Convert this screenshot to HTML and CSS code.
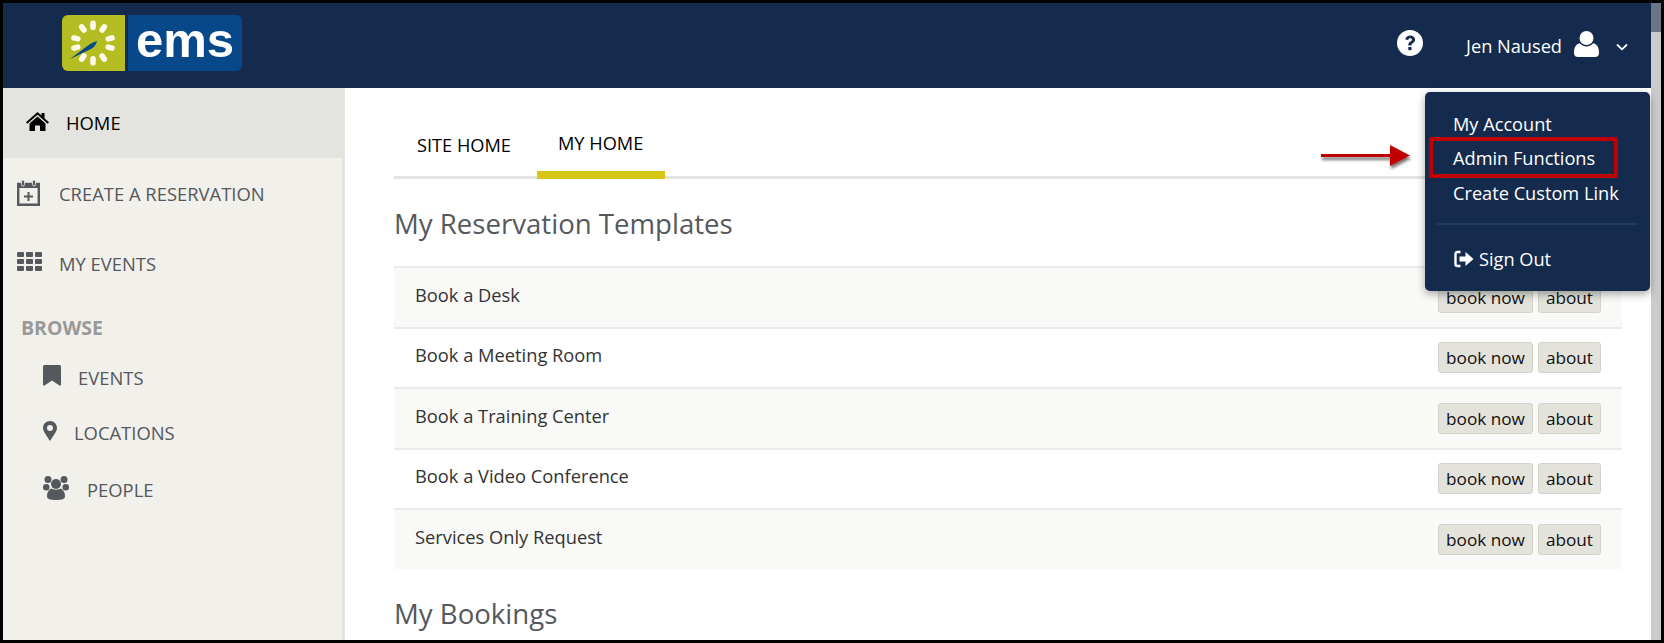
FILE: index.html
```html
<!DOCTYPE html>
<html lang="en">

<head>
    <meta charset="UTF-8">
    <meta name="viewport" content="width=device-width, initial-scale=1.0">
    <title>EMS - My Home</title>
    <link rel="stylesheet" href="styles.css">
</head>

<body>
    <div class="frame">
        <div class="page">
            <header class="topbar">
                <div class="logo">
                    <div class="logo-sun">
                        <svg width="63" height="56" viewBox="0 0 63 56">
                            <g fill="#fdfbe8">
                                <rect x="28.2" y="5.500" width="5.600" height="9.500" rx="2.800"/>
                                <rect x="28.2" y="5.500" width="5.600" height="9.500" rx="2.800" transform="rotate(35 31 28)"/>
                                <rect x="28.2" y="5.500" width="5.600" height="9.500" rx="2.800" transform="rotate(75 31 28)"/>
                                <rect x="28.2" y="5.500" width="5.600" height="9.500" rx="2.800" transform="rotate(105 31 28)"/>
                                <rect x="28.2" y="5.500" width="5.600" height="9.500" rx="2.800" transform="rotate(145 31 28)"/>
                                <rect x="28.2" y="5.500" width="5.600" height="9.500" rx="2.800" transform="rotate(180 31 28)"/>
                                <rect x="28.2" y="5.500" width="5.600" height="9.500" rx="2.800" transform="rotate(215 31 28)"/>
                                <rect x="28.2" y="5.500" width="5.600" height="9.500" rx="2.800" transform="rotate(255 31 28)"/>
                                <rect x="28.2" y="5.500" width="5.600" height="9.500" rx="2.800" transform="rotate(285 31 28)"/>
                                <rect x="28.2" y="5.500" width="5.600" height="9.500" rx="2.800" transform="rotate(325 31 28)"/>
                            </g>
                            <path d="M8 44L26 30.500Q30 27 35 26Q34 31 29 34Z" fill="#07488a"/>
                        </svg>
                    </div>
                    <div class="logo-word">ems</div>
                </div>
                <div class="topbar-right">
                    <svg class="help-icon" width="26" height="26" viewBox="0 0 26 26">
                        <circle cx="13" cy="13" r="13" fill="#fff"/>
                        <path d="M8.3 9.6C8.8 6.9 10.7 5.5 13.3 5.5c2.7 0 4.8 1.7 4.8 4.1 0 1.8-1 2.8-2.3 3.700-1 .7-1.3 1.1-1.3 2.200h-3.2c0-2 .6-3 2-3.900 1-.7 1.600-1.100 1.600-1.900 0-.8-.7-1.400-1.700-1.400-1.100 0-1.800.6-2.100 1.800z" fill="#152b4d"/>
                        <rect x="11.3" y="17" width="3.2" height="3.2" fill="#152b4d"/>
                    </svg>
                    <span class="user-name">Jen Naused</span>
                    <svg class="user-icon" width="25" height="26" viewBox="0 0 25 26">
                        <circle cx="12.5" cy="7" r="7" fill="#fff"/>
                        <path d="M0 22C0 15 3 12.500 6 12.500C8 14.500 10 15.500 12.500 15.500S17 14.500 19 12.500C22 12.500 25 15 25 22C25 25 23 26 21 26H4C2 26 0 25 0 22Z" fill="#fff"/>
                    </svg>
                    <svg class="chevron" width="12" height="8" viewBox="0 0 12 8">
                        <path d="M1 1.500L6 6.300L11 1.500" fill="none" stroke="#fff" stroke-width="1.800"/>
                    </svg>
                </div>
            </header>

            <div class="body-row">
                <nav class="sidebar">
                    <a class="nav-item nav-home">
                        <svg width="23" height="19" viewBox="0 0 23 19">
                            <path d="M11.500 0L15.500 3.500V1H18.500V6.200L23 10.200L21.700 11.700L11.500 2.800L1.300 11.700L0 10.200Z" fill="#000"/>
                            <path d="M3.500 11.500L11.500 4.500L19.500 11.500V19H14V13.500H9V19H3.500Z" fill="#000"/>
                        </svg>
                        <span class="home-label">HOME</span>
                    </a>
                    <a class="nav-item nav-create">
                        <svg width="23" height="27" viewBox="0 0 23 27">
                            <path d="M1.200 5H21.800V25.800H1.200Z" fill="none" stroke="#55585d" stroke-width="2.400"/>
                            <rect x="1" y="4" width="21" height="5" fill="#55585d"/>
                            <rect x="4.500" y="1" width="3" height="6" rx="1.500" fill="#55585d" stroke="#f1f0ea" stroke-width=".8"/>
                            <rect x="15.500" y="1" width="3" height="6" rx="1.500" fill="#55585d" stroke="#f1f0ea" stroke-width=".8"/>
                            <path d="M7 17.500H16M11.500 13V22" stroke="#55585d" stroke-width="2"/>
                        </svg>
                        <span>CREATE A RESERVATION</span>
                    </a>
                    <a class="nav-item nav-events">
                        <svg width="25" height="19" viewBox="0 0 25 19">
                            <g fill="#55585d">
                                <rect width="7" height="5" rx="1"/><rect x="9" width="7" height="5" rx="1"/><rect x="18" width="7" height="5" rx="1"/>
                                <rect y="7" width="7" height="5" rx="1"/><rect x="9" y="7" width="7" height="5" rx="1"/><rect x="18" y="7" width="7" height="5" rx="1"/>
                                <rect y="14" width="7" height="5" rx="1"/><rect x="9" y="14" width="7" height="5" rx="1"/><rect x="18" y="14" width="7" height="5" rx="1"/>
                            </g>
                        </svg>
                        <span>MY EVENTS</span>
                    </a>
                    <div class="nav-title">BROWSE</div>
                    <a class="nav-sub nav-sub-events">
                        <svg width="18" height="21" viewBox="0 0 18 21">
                            <path d="M1.500 0H16.500Q18 0 18 1.500V19.500Q18 21 16.500 20.500L9 15.500L1.500 20.500Q0 21 0 19.500V1.500Q0 0 1.500 0Z" fill="#55585d"/>
                        </svg>
                        <span>EVENTS</span>
                    </a>
                    <a class="nav-sub nav-sub-locations">
                        <svg width="14" height="20" viewBox="0 0 14 20">
                            <path fill-rule="evenodd" d="M7 0C3 0 0 3 0 7C0 10.500 4.500 16 7 20C9.500 16 14 10.500 14 7C14 3 11 0 7 0ZM7 4A3 3 0 1 1 7 10A3 3 0 1 1 7 4Z" fill="#55585d"/>
                        </svg>
                        <span>LOCATIONS</span>
                    </a>
                    <a class="nav-sub nav-sub-people">
                        <svg width="26" height="24" viewBox="0 0 26 24">
                            <g fill="#55585d">
                                <circle cx="5" cy="3.500" r="3.500"/><circle cx="21" cy="3.500" r="3.500"/>
                                <circle cx="13" cy="8" r="5"/>
                                <rect x="0" y="8" width="6.500" height="6.500" rx="3"/><rect x="19.500" y="8" width="6.500" height="6.500" rx="3"/>
                                <path d="M4 20C4 16 6 13.500 8.500 12.500C10 14 16 14 17.500 12.500C20 13.500 22 16 22 20C22 23 19 24 13 24S4 23 4 20Z"/>
                            </g>
                        </svg>
                        <span>PEOPLE</span>
                    </a>
                </nav>

                <main class="content">
                    <div class="tabs">
                        <a class="tab">SITE HOME</a>
                        <a class="tab tab-active">MY HOME</a>
                    </div>
                    <h2 class="section-title">My Reservation Templates</h2>
                    <div class="template-list">
                        <div class="template-row row-odd">
                            <span class="row-label">Book a Desk</span>
                            <div class="row-buttons"><button class="btn btn-book">book now</button><button class="btn">about</button></div>
                        </div>
                        <div class="template-row">
                            <span class="row-label">Book a Meeting Room</span>
                            <div class="row-buttons"><button class="btn btn-book">book now</button><button class="btn">about</button></div>
                        </div>
                        <div class="template-row row-odd">
                            <span class="row-label">Book a Training Center</span>
                            <div class="row-buttons"><button class="btn btn-book">book now</button><button class="btn">about</button></div>
                        </div>
                        <div class="template-row">
                            <span class="row-label">Book a Video Conference</span>
                            <div class="row-buttons"><button class="btn btn-book">book now</button><button class="btn">about</button></div>
                        </div>
                        <div class="template-row row-odd">
                            <span class="row-label">Services Only Request</span>
                            <div class="row-buttons"><button class="btn btn-book">book now</button><button class="btn">about</button></div>
                        </div>
                    </div>
                    <h2 class="section-title">My Bookings</h2>
                </main>
            </div>

            <div class="user-menu">
                <a class="menu-item">My Account</a>
                <a class="menu-item menu-marked">Admin Functions</a>
                <a class="menu-item">Create Custom Link</a>
                <div class="menu-divider"></div>
                <a class="menu-item menu-signout">
                    <svg width="21" height="18" viewBox="0 0 20 18">
                        <path d="M7 2H4Q2 2 2 4V14Q2 16 4 16H7" fill="none" stroke="#fff" stroke-width="2.400"/>
                        <path d="M6 6.500H12V2L20 9L12 16V11.500H6Z" fill="#fff"/>
                    </svg>
                    <span>Sign Out</span>
                </a>
            </div>

            <svg class="red-arrow" width="96" height="32" viewBox="0 0 96 32">
                <defs>
                    <filter id="arrow-shadow" x="-10%" y="-50%" width="120%" height="220%">
                        <feDropShadow dx="1" dy="3" stdDeviation="1.500" flood-color="#000" flood-opacity=".55"/>
                    </filter>
                </defs>
                <path d="M1 10H70V1L90 11.500L70 22V13H1Z" fill="#c00000" filter="url(#arrow-shadow)"/>
            </svg>
        </div>
        <div class="scrollbar"><div class="scroll-top"></div></div>
    </div>
</body>

</html>
```

FILE: styles.css
```css
html,
body {
    margin: 0;
    padding: 0;
    height: 100%;
    overflow: hidden;
}

body {
    font-family: "Open Sans", Arial, sans-serif;
    background-color: #000;
}

.frame {
    display: flex;
    height: 637px;
    margin: 3px;
    overflow: hidden;
}

.page {
    position: relative;
    flex: 1;
    min-width: 0;
    background-color: #fff;
}

.scrollbar {
    width: 10px;
    background-color: #cbcbcb;
}

.scroll-top {
    height: 29px;
    background-color: #6b7588;
}

/* top bar */
.topbar {
    display: flex;
    justify-content: space-between;
    align-items: center;
    height: 85px;
    padding: 0 23px 0 59px;
    box-sizing: border-box;
    background-color: #152b4d;
}

.logo {
    display: flex;
    gap: 3px;
    height: 56px;
    margin-bottom: 6px;
}

.logo-sun {
    width: 63px;
    background-color: #b4bd22;
    border-radius: 6px 0 0 6px;
}

.logo-word {
    width: 114px;
    text-align: center;
    background-color: #07488a;
    border-radius: 0 6px 6px 0;
    color: #fff;
    font-family: "Liberation Sans", Arial, sans-serif;
    font-weight: bold;
    font-size: 49px;
    line-height: 50px;
}

.topbar-right {
    display: flex;
    align-items: center;
    color: #fff;
}

.help-icon {
    margin-right: 43px;
    margin-bottom: 6px;
}

.user-name {
    font-size: 18.200px;
    margin-right: 12px;
}

.user-icon {
    margin-right: 17px;
    margin-bottom: 4px;
}

.chevron {
    margin-top: 3px;
}

/* sidebar */
.body-row {
    display: flex;
    height: 552px;
}

.sidebar {
    width: 339px;
    flex: none;
    background-color: #f1f0ea;
    border-right: 3px solid #e3e4df;
    color: #55585d;
    font-size: 18.400px;
}

.nav-item,
.nav-sub {
    display: flex;
    align-items: center;
}

.nav-home {
    height: 70px;
    padding-left: 23px;
    gap: 17px;
    background-color: #e3e4df;
    color: #000;
}

.nav-home svg {
    margin-bottom: 4px;
}

.home-label {
    margin-bottom: 2px;
}

.nav-create {
    height: 71px;
    padding-left: 14px;
    gap: 19px;
}

.nav-create svg {
    margin-bottom: 3px;
}

.nav-events {
    height: 68px;
    padding-left: 14px;
    gap: 17px;
}

.nav-events svg {
    margin-bottom: 4px;
}

.nav-title {
    margin: 19px 0 0 18px;
    height: 24px;
    line-height: 24px;
    font-weight: 700;
    font-size: 19.500px;
    color: #999;
}

.nav-sub {
    height: 56px;
    padding-left: 40px;
}

.nav-sub svg {
    margin-bottom: 4px;
}

.nav-sub-events {
    margin-top: 9px;
    gap: 17px;
}

.nav-sub-locations {
    gap: 17px;
    height: 55px;
}

.nav-sub-people {
    gap: 18px;
    height: 59px;
}

/* main content */
.content {
    flex: 1;
    min-width: 0;
    padding: 0 29px 0 49px;
}

.tabs {
    display: flex;
    height: 91px;
    box-sizing: border-box;
    border-bottom: 3px solid #e3e3e3;
    color: #000;
    font-size: 18.200px;
}

.tab {
    box-sizing: border-box;
    height: 91px;
    width: 143px;
    padding: 45px 0 0 23px;
}

.tab-active {
    width: 128px;
    padding: 43px 0 0 21px;
    border-bottom: 8px solid #d6c618;
}

.section-title {
    margin: 0;
    padding: 26px 0 25px;
    font-weight: 400;
    font-size: 27.600px;
    line-height: 36px;
    color: #55585d;
}

.template-row {
    display: flex;
    justify-content: space-between;
    align-items: center;
    height: 60.500px;
    box-sizing: border-box;
    padding: 0 21px;
    border-top: 2px solid #eaeaea;
    color: #333;
    font-size: 18.300px;
}

.row-label {
    margin-bottom: 6px;
}

.row-odd {
    background-color: #f9f9f7;
}

.row-buttons {
    display: flex;
    gap: 5px;
}

.btn {
    height: 31px;
    padding: 0 7px;
    font-family: inherit;
    font-size: 17.200px;
    color: #111;
    background-color: #e3e3dc;
    border: 1px solid #d3d3ca;
    border-radius: 3px;
}

/* user dropdown */
.user-menu {
    position: absolute;
    top: 89px;
    right: 1px;
    width: 225px;
    height: 199px;
    box-sizing: border-box;
    padding: 15px 0 0 28px;
    border-radius: 5px;
    background-color: #152b4d;
    box-shadow: 0 3px 8px rgba(0, 0, 0, 0.35);
    color: #fff;
    font-size: 18.200px;
}

.menu-item {
    display: block;
    height: 34.500px;
    line-height: 34.500px;
}

.menu-marked {
    position: relative;
    line-height: 32.500px;
}

.menu-marked::after {
    content: "";
    position: absolute;
    left: -24px;
    top: -5px;
    width: 181px;
    height: 33px;
    border: 4px solid #c00000;
}

.menu-divider {
    height: 2px;
    margin: 12px 12px 17px -16px;
    background-color: #1f3a63;
}

.menu-signout {
    display: flex;
    align-items: center;
    gap: 5px;
}

.red-arrow {
    position: absolute;
    left: 1317px;
    top: 141px;
}
```
